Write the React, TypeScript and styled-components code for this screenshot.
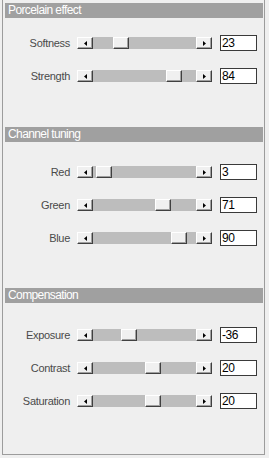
import React from 'react';
import styled, { createGlobalStyle } from 'styled-components';

const GlobalStyle = createGlobalStyle`
  html, body {
    margin: 0;
    padding: 0;
    background: #efefef;
  }
  body {
    font-family: 'Liberation Sans', Arial, sans-serif;
  }
`;

type Slider = { label: string; value: number; min: number; max: number };

type Section = { title: string; headerGap: number; bodyGap: number; sliders: Slider[] };

const sections: Section[] = [
  {
    title: 'Porcelain effect',
    headerGap: 0,
    bodyGap: 17,
    sliders: [
      { label: 'Softness', value: 23, min: 0, max: 100 },
      { label: 'Strength', value: 84, min: 0, max: 100 },
    ],
  },
  {
    title: 'Channel tuning',
    headerGap: 43,
    bodyGap: 22,
    sliders: [
      { label: 'Red', value: 3, min: 0, max: 100 },
      { label: 'Green', value: 71, min: 0, max: 100 },
      { label: 'Blue', value: 90, min: 0, max: 100 },
    ],
  },
  {
    title: 'Compensation',
    headerGap: 42,
    bodyGap: 24,
    sliders: [
      { label: 'Exposure', value: -36, min: -100, max: 100 },
      { label: 'Contrast', value: 20, min: -100, max: 100 },
      { label: 'Saturation', value: 20, min: -100, max: 100 },
    ],
  },
];

const S = {
  Panel: styled.div`
    box-sizing: border-box;
    width: 263px;
    height: 455px;
    margin-left: 2px;
    padding: 3px 1px 0 2px;
    border: 1px solid #9c9c9c;
    border-top: none;
    background: #efefef;
    display: flex;
    flex-direction: column;
  `,
  Header: styled.div<{ $gap: number }>`
    height: 15px;
    margin-top: ${({ $gap }) => $gap}px;
    padding-left: 3px;
    background: #a0a0a0;
    color: #fff;
    font-size: 12px;
    letter-spacing: -0.6px;
    line-height: 15px;
    white-space: nowrap;
  `,
  Body: styled.div<{ $gap: number }>`
    display: flex;
    flex-direction: column;
    gap: 17px;
    margin-top: ${({ $gap }) => $gap}px;
  `,
  Row: styled.div`
    display: flex;
    align-items: center;
    height: 16px;
  `,
  Label: styled.div`
    width: 65px;
    margin-right: 7px;
    text-align: right;
    color: #4a4a4a;
    font-size: 11px;
    letter-spacing: -0.3px;
    white-space: nowrap;
  `,
  Scrollbar: styled.div`
    display: flex;
    width: 135px;
    height: 12px;
  `,
  Track: styled.div`
    position: relative;
    flex: 1;
    background: #bdbdbd;
  `,
  Button: styled.div`
    box-sizing: border-box;
    width: 16px;
    height: 12px;
    display: flex;
    align-items: center;
    justify-content: center;
    background: #f0f0f0;
    border: 1px solid;
    border-color: #ffffff #404040 #404040 #ffffff;
    box-shadow: inset -1px -1px #a0a0a0;
  `,
  Thumb: styled.div`
    position: absolute;
    top: 0;
    box-sizing: border-box;
    width: 16px;
    height: 12px;
    background: #f0f0f0;
    border: 1px solid;
    border-color: #ffffff #404040 #404040 #ffffff;
    box-shadow: inset -1px -1px #a0a0a0;
  `,
  Input: styled.div`
    box-sizing: border-box;
    width: 37px;
    height: 16px;
    margin-left: 8px;
    padding-left: 1px;
    background: #fff;
    border: 1px solid #3a3a3a;
    color: #000;
    font-size: 12px;
    letter-spacing: -0.4px;
    line-height: 14px;
  `,
};

const Arrow = ({ dir }: { dir: 'left' | 'right' }) => (
  <svg width="3" height="5" viewBox="0 0 3 5">
    <path d={dir === 'left' ? 'M3 0 L0 2.5 L3 5 Z' : 'M0 0 L3 2.5 L0 5 Z'} fill="#000" />
  </svg>
);

const SliderRow = ({ label, value, min, max }: Slider) => {
  const travel = 103 - 16;
  const left = Math.round(((value - min) / (max - min)) * travel);
  return (
    <S.Row>
      <S.Label>{label}</S.Label>
      <S.Scrollbar>
        <S.Button>
          <Arrow dir="left" />
        </S.Button>
        <S.Track>
          <S.Thumb style={{ left }} />
        </S.Track>
        <S.Button>
          <Arrow dir="right" />
        </S.Button>
      </S.Scrollbar>
      <S.Input>{value}</S.Input>
    </S.Row>
  );
};

const App = () => (
  <>
    <GlobalStyle />
    <S.Panel>
      {sections.map((section) => (
        <React.Fragment key={section.title}>
          <S.Header $gap={section.headerGap}>{section.title}</S.Header>
          <S.Body $gap={section.bodyGap}>
            {section.sliders.map((s) => (
              <SliderRow key={s.label} {...s} />
            ))}
          </S.Body>
        </React.Fragment>
      ))}
    </S.Panel>
  </>
);

export default App;
